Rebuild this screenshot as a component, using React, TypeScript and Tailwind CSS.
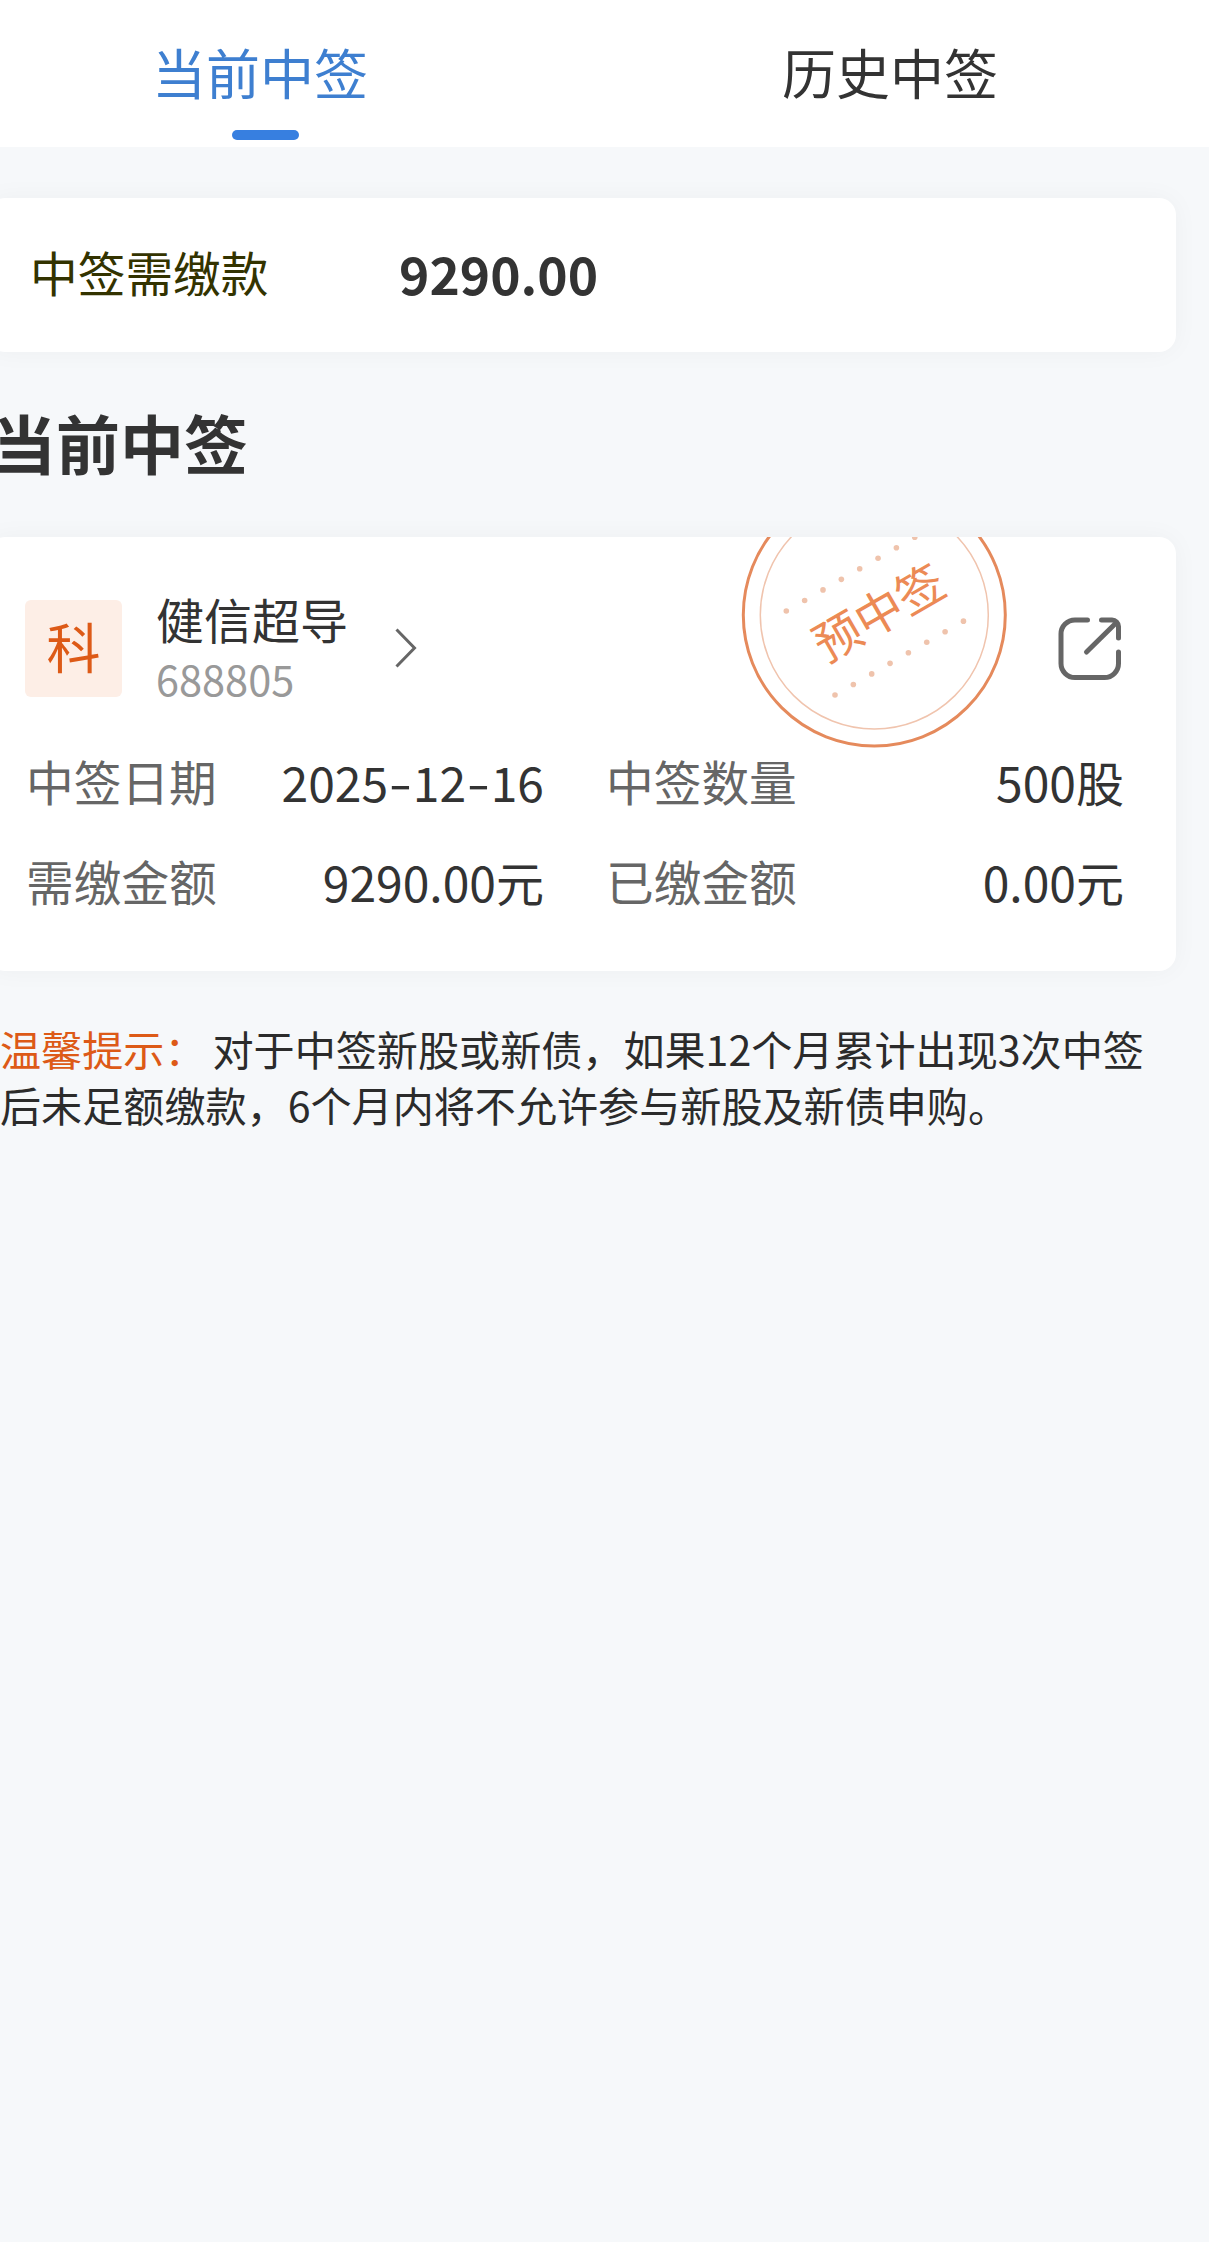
import { clsx } from "clsx";

const tabs = [
  { label: "当前中签", active: true },
  { label: "历史中签", active: false },
];

const details = [
  { label: "中签日期", value: "2025-12-16" },
  { label: "中签数量", value: "500股" },
  { label: "需缴金额", value: "9290.00元" },
  { label: "已缴金额", value: "0.00元" },
];

const DOTS = [0, 1, 2, 3, 4, 5, 6, 7];

const Stamp = () => (
  <svg className="absolute left-[752px] top-[-56px]" width="268" height="268" viewBox="0 0 268 268" aria-hidden="true">
    <circle cx="134.3" cy="134" r="131" fill="none" stroke="#e58a5c" strokeWidth="3" />
    <circle cx="134.3" cy="134" r="114" fill="none" stroke="#f0c4ae" strokeWidth="1.5" />
    <g fill="#efc3ac">
      {DOTS.map((i) => (
        <circle key={`t${i}`} cx={46.3 + i * 18.35} cy={130 - i * 10.55} r="2.8" />
      ))}
      {DOTS.map((i) => (
        <circle key={`b${i}`} cx={95 + i * 18.35} cy={214 - i * 10.55} r="2.8" />
      ))}
    </g>
    <text
      transform="translate(139 132) rotate(-30)"
      textAnchor="middle"
      y="17.5"
      fontSize="47.5"
      fill="#ec8a55"
    >
      预中签
    </text>
  </svg>
);

const ShareIcon = () => (
  <svg
    width="64"
    height="64"
    viewBox="0 0 64 64"
    fill="none"
    stroke="#666666"
    strokeWidth="5"
    strokeLinecap="round"
    strokeLinejoin="round"
    aria-hidden="true"
  >
    <path d="M29.5 3H17A14 14 0 0 0 3 17v29.5a14 14 0 0 0 14 14h29.5a14 14 0 0 0 14-14V35" />
    <path d="M43.5 3H54a6.5 6.5 0 0 1 6.5 6.5V21M58.5 5.5 28.5 35" />
  </svg>
);

// Hyphens in dates are drawn a little wider than the font's own
const Value = ({ text }: { text: string }) => (
  <span className="text-[48px]">
    {text.split("").map((char, i) =>
      char === "-" ? (
        <span key={i} className="mx-1 inline-block -translate-y-px scale-x-140">
          -
        </span>
      ) : (
        char
      )
    )}
  </span>
);

export default function App() {
  return (
    <div className="min-h-[2242px] w-[1209px] overflow-hidden bg-[#f6f8fa] font-['Noto_Sans_CJK_SC',sans-serif] text-[#333333]">
      <nav className="flex h-[147px] gap-[414px] bg-white pl-[152px]">
        {tabs.map((tab) => (
          <button
            key={tab.label}
            className={clsx(
              "flex h-full w-[216px] flex-col items-center whitespace-nowrap pt-8 text-[54px] leading-[80px]",
              tab.active && "text-[#3e7fd0]"
            )}
          >
            {tab.label}
            {tab.active && <span className="ml-[10px] mt-[18px] h-[10px] w-[67px] rounded-[5px] bg-[#377fe0]" />}
          </button>
        ))}
      </nav>

      <section className="-ml-3 mt-[51px] flex h-[154px] w-[1188px] items-center rounded-[17px] bg-white pl-[42px] shadow-[0_0_26px_rgba(0,0,0,0.04)]">
        <span className="w-[369px] pb-[7px] text-[47.7px] leading-none text-[#333300]">中签需缴款</span>
        <span className="pb-1 text-[51.5px] font-bold leading-none">9290.00</span>
      </section>

      <h2 className="-ml-2 mt-[49px] text-[64px] font-bold leading-[80px]">当前中签</h2>

      <section className="relative -ml-3 mt-14 h-[434px] w-[1188px] rounded-[17px] bg-white pl-[37px] pr-[52px] pt-[54px] shadow-[0_0_26px_rgba(0,0,0,0.04)]">
        <div className="absolute inset-0 overflow-hidden rounded-[17px]">
          <Stamp />
        </div>

        <div className="flex h-[116px] items-start">
          <div className="mt-[9px] flex h-[97px] w-[97px] items-center justify-center rounded-md bg-[#fdeee6] pb-1.5 text-[54px] leading-none text-[#dd5a17]">
            科
          </div>
          <div className="ml-[34px] w-[192px]">
            <div className="text-[48px] leading-[54px]">健信超导</div>
            <div className="text-[41.5px] leading-[67px] text-[#999999]">688805</div>
          </div>
          <svg className="ml-[47px] mt-[37px]" width="22" height="40" viewBox="0 0 22 40" fill="none" stroke="#666666" strokeWidth="3">
            <path d="M1.5 1.5 19.5 20 1.5 38.5" />
          </svg>
          <div className="ml-auto mr-[2px] mt-[26px]">
            <ShareIcon />
          </div>
        </div>

        <div className="mt-6 grid grid-cols-[518px_518px] gap-x-[62px] pl-px text-[47.7px] leading-[100px]">
          {details.map((item) => (
            <div key={item.label} className="flex justify-between">
              <span className="text-[#666666]">{item.label}</span>
              <Value text={item.value} />
            </div>
          ))}
        </div>
      </section>

      <p className="mt-[49px] w-[1160px] text-[41.1px] leading-[56px] text-[#2b2b2b]">
        <span className="mr-[7px] text-[#dd5a17]">温馨提示：</span>
        对于中签新股或新债，如果12个月累计出现3次中签后未足额缴款，6个月内将不允许参与新股及新债申购。
      </p>
    </div>
  );
}
